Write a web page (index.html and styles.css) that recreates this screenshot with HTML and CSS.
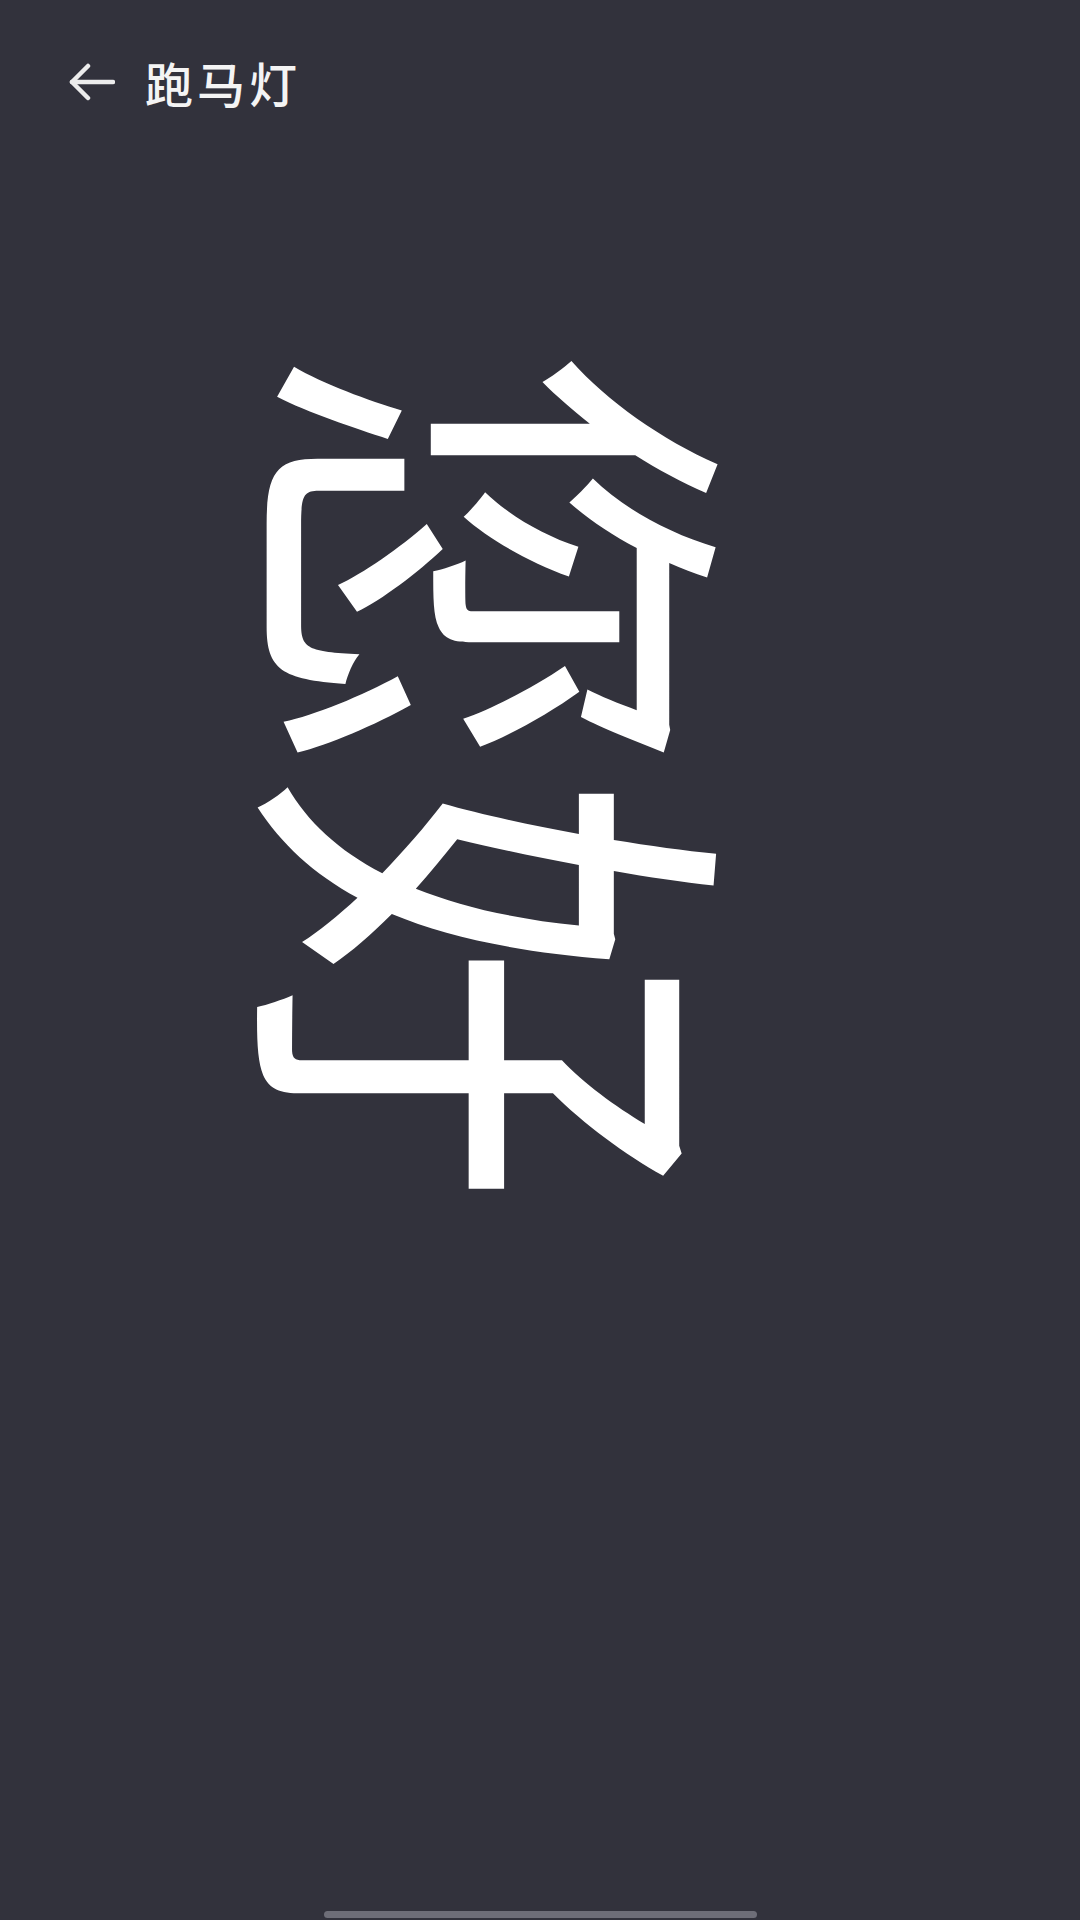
FILE: index.html
```html
<!DOCTYPE html>
<html lang="zh-CN">
<head>
<meta charset="utf-8">
<title>跑马灯</title>
<link rel="stylesheet" href="styles.css">
</head>
<body>
<div class="screen">
  <header class="topbar">
    <button class="back" aria-label="返回">
      <svg viewBox="0 0 46 38" width="46" height="38" fill="none" stroke="#ececec" stroke-width="4.5" stroke-linecap="round" stroke-linejoin="round">
        <path d="M44 19 H3"/>
        <path d="M19 3 L3 19 L19 35"/>
      </svg>
    </button>
    <h1 class="title">跑马灯</h1>
  </header>
  <main class="stage">
    <div class="marquee">您好</div>
  </main>
  <div class="home-bar"></div>
</div>
</body>
</html>
```

FILE: styles.css
```css
html, body {
  margin: 0;
  padding: 0;
  background: #32323c;
}
.screen {
  width: 1080px;
  height: 1920px;
  display: flex;
  flex-direction: column;
  background: #32323c;
  font-family: "Noto Sans CJK SC", "Noto Sans", sans-serif;
  color: #ffffff;
  overflow: hidden;
}
.topbar {
  height: 164px;
  display: flex;
  align-items: center;
  padding-left: 69px;
  box-sizing: border-box;
  gap: 30px;
}
.back {
  background: none;
  border: 0;
  padding: 0;
  width: 46px;
  height: 38px;
  display: flex;
}
.title {
  margin: 0;
  font-size: 48px;
  font-weight: 500;
  letter-spacing: 4px;
  color: #f4f4f4;
  line-height: 1;
}
.stage {
  flex: 1;
  display: flex;
  justify-content: center;
  align-items: flex-start;
  padding-top: 182px;
  padding-right: 52px;
}
.marquee {
  writing-mode: vertical-rl;
  text-orientation: sideways;
  font-size: 430px;
  line-height: 1;
  color: #ffffff;
  white-space: nowrap;
  transform: scaleX(1.16);
}
.home-bar {
  align-self: center;
  width: 433px;
  height: 7px;
  border-radius: 4px;
  background: #6e6e78;
  margin-bottom: 2px;
}
```
